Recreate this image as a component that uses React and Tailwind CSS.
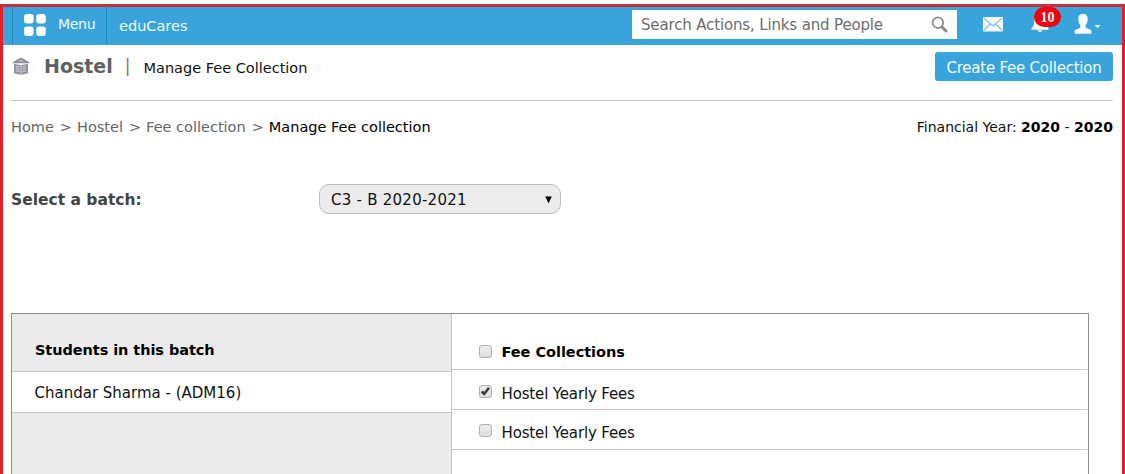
import React from "react";

function MenuGridIcon() {
  return (
    <svg width="24" height="24" viewBox="0 0 24 24" fill="#fff" className="shrink-0">
      <rect x="1" y="1" width="9.6" height="9.6" rx="3" />
      <rect x="13.2" y="1" width="9.6" height="9.6" rx="3" />
      <rect x="1" y="13.4" width="9.6" height="9.6" rx="3" />
      <rect x="13.2" y="13.4" width="9.6" height="9.6" rx="3" />
    </svg>
  );
}

function HostelIcon() {
  return (
    <svg width="18" height="19" viewBox="0 0 18 19" className="shrink-0">
      <path d="M9 0.5 17.300 5.200v1H0.700v-1Z" fill="#8a8c99" />
      <path d="M9 2.400 12.500 4.500h-7Z" fill="#c3c4cd" />
      <path d="M2 7 9 8l7-1v9.300L9 18l-7-1.700Z" fill="#9193a0" />
      <path d="M9 8v10M4 9.500l3.500.5M4 11.700l3.500.5M4 13.900l3.500.5M14 9.500l-3.500.5M14 11.700l-3.500.5M14 13.900l-3.500.5" stroke="#dcdce4" strokeWidth="0.9" fill="none" />
    </svg>
  );
}

function SearchIcon() {
  return (
    <svg width="17" height="17" viewBox="0 0 17 17" fill="none" stroke="#8c8c8c" className="shrink-0">
      <circle cx="6.9" cy="6.700" r="5.300" strokeWidth="1.8" />
      <path d="M11.200 11.200 15 15" strokeWidth="3" strokeLinecap="round" />
    </svg>
  );
}

function MailIcon() {
  return (
    <svg width="20" height="15" viewBox="0 0 20 15" className="shrink-0">
      <rect width="20" height="14.5" rx="0.8" fill="#f4fafd" />
      <path d="M0.8 1.2 10 9l9.2-7.800M0.8 13.4 7.2 7M19.2 13.4 12.8 7" stroke="#7dbbdb" strokeWidth="1.1" fill="none" />
    </svg>
  );
}

function BellIcon() {
  return (
    <svg width="18" height="20" viewBox="0 0 18 20" fill="#f4fafd" className="shrink-0">
      <path d="M9 1c-4 0-5.8 3-5.8 6.500 0 4-.7 5.800-2.700 7.500v1.800h17V15c-2-1.700-2.700-3.500-2.700-7.500C14.800 4 13 1 9 1Z" />
      <path d="M6.500 17.300h5c-.5 2.200-4.500 2.200-5 0Z" />
    </svg>
  );
}

function UserIcon() {
  return (
    <svg width="18" height="20" viewBox="0 0 18 20" fill="#f4fafd" className="shrink-0">
      <path d="M9 0C5.500 0 4.200 2 4.300 5c.1 3 .9 4.800 2 6v2.300C6.300 15 .5 14.700.5 17.500v2.200h17v-2.200c0-2.800-5.800-2.500-5.800-4.200V11c1.100-1.200 1.900-3 2-6C13.800 2 12.500 0 9 0Z" />
    </svg>
  );
}

function Checkbox({ checked }) {
  return (
    <span className="flex h-[13px] w-[13px] shrink-0 items-center justify-center rounded-[3px] border border-[#b0b0b0] bg-linear-to-b from-[#ededed] to-[#dedede]">
      {checked && (
        <svg width="11" height="11" viewBox="0 0 11 11" fill="none" stroke="#3d3d3d" strokeWidth="2.6">
          <path d="M1.700 5.500 4.300 7.800 9 1.800" />
        </svg>
      )}
    </span>
  );
}

function Header() {
  return (
    <header className="flex h-[38px] bg-[#39a4dc] text-[#f1faff]">
      <div className="ml-[9px] flex w-[95px] border-x border-[#2586bb] pl-[10px]">
        <div className="pt-[6px]"><MenuGridIcon /></div>
        <span className="ml-[11px] pt-[7px] text-[14px] leading-5 tracking-[-0.3px]">Menu</span>
      </div>
      <span className="ml-[12px] pt-[9px] text-[14.500px] leading-5">eduCares</span>
      <div className="mt-[3px] ml-auto flex h-[29px] w-[325px] items-center justify-between bg-white pr-[9px] pl-[9px] text-[#6d6d6d]">
        <span className="text-[15px] leading-5 tracking-[-0.15px]">Search Actions, Links and People</span>
        <SearchIcon />
      </div>
      <div className="ml-[26px] pt-[10px]"><MailIcon /></div>
      <div className="relative ml-[28px] w-[18px] pt-[6px]">
        <BellIcon />
        <span className="absolute top-0 left-[3px] flex h-[20px] w-[27px] items-center justify-center rounded-full bg-[#ec0510] font-['Liberation_Serif',serif] text-[14px] font-bold">10</span>
      </div>
      <div className="mr-[21px] ml-[25px] flex pt-[7px]">
        <UserIcon />
        <svg width="7" height="20" viewBox="0 0 7 20" fill="#f4fafd" className="ml-[2px]">
          <path d="M0.500 11h6L3.500 14Z" />
        </svg>
      </div>
    </header>
  );
}

function TitleBar() {
  return (
    <div className="ml-[8px] mr-[9px] flex h-[56px] border-b border-[#c8c8c8]">
      <div className="ml-[1px] pt-[12px]"><HostelIcon /></div>
      <h1 className="ml-[14px] pt-[9px] text-[19px] leading-6 font-bold text-[#606060]">Hostel</h1>
      <span className="ml-[12px] pt-[9px] text-[17px] leading-6 text-[#777]">|</span>
      <span className="ml-[13px] pt-[13px] text-[14.500px] leading-5 text-[#111]">Manage Fee Collection</span>
      <button className="mt-[7px] ml-auto h-[29px] w-[178px] rounded-[3px] bg-[#39a4dc] pt-px text-[15px] leading-[30px] tracking-[-0.23px] whitespace-nowrap text-[#f1faff]">Create Fee Collection</button>
    </div>
  );
}

function Breadcrumbs() {
  return (
    <div className="mr-[9px] ml-[8px] flex justify-between pt-[16px] leading-5 text-[#111]">
      <nav className="flex text-[14.500px] text-[#666]">
        <span>Home</span>
        <span className="ml-[6px]">&gt;</span>
        <span className="ml-[5px]">Hostel</span>
        <span className="ml-[6px]">&gt;</span>
        <span className="ml-[5px]">Fee collection</span>
        <span className="ml-[6px]">&gt;</span>
        <span className="ml-[5px] text-black">Manage Fee collection</span>
      </nav>
      <div className="text-[14px]">
        Financial Year: <b className="text-black">2020</b> - <b className="text-black">2020</b>
      </div>
    </div>
  );
}

function BatchPicker() {
  return (
    <div className="mt-[47px] ml-[8px] flex h-[30px] items-center">
      <label className="w-[308px] pt-px text-[15.500px] leading-5 font-bold text-[#444]">Select a batch:</label>
      <div className="flex h-[30px] w-[242px] items-center justify-between rounded-[10px] border border-[#bdbdbd] bg-[#ececec] pr-[7px] pl-[11px]">
        <span className="pt-px text-[15px] leading-5 tracking-[0.25px] text-[#111]">C3 - B 2020-2021</span>
        <svg width="9" height="8" viewBox="0 0 9 8" className="mt-px"><path d="M1.200 0.500h6.600L4.500 7.300Z" fill="#000" /></svg>
      </div>
    </div>
  );
}

function FeeRow({ checked, children, className }) {
  return (
    <div className={`flex border-b border-[#c8c8c8] pl-[27px] ${className}`}>
      <Checkbox checked={checked} />
      <span className="-mt-px ml-[9.500px] leading-5 tracking-[-0.15px]">{children}</span>
    </div>
  );
}

function FeeTable() {
  return (
    <div className="mt-[99px] ml-[8px] flex w-[1078px] grow border border-b-0 border-[#8f8f8f] text-[15px] text-[#111]">
      <div className="w-[440px] border-r border-[#c0c0c0] bg-[#ebebeb]">
        <div className="h-[58px] border-b border-[#c8c8c8] pt-[26px] pl-[23px] leading-5 font-bold text-black"><span className="text-[14.500px] tracking-[-0.07px]">Students in this batch</span></div>
        <div className="h-[41px] border-b border-[#c8c8c8] bg-white pt-[11px] pl-[22.500px] leading-5">Chandar Sharma - (ADM16)</div>
      </div>
      <div className="grow pr-px">
        <FeeRow className="h-[56px] pt-[31px]"><b className="relative -top-[2px] text-[14.500px] tracking-[-0.03px] text-black">Fee Collections</b></FeeRow>
        <FeeRow className="h-[40px] pt-[15px]" checked>Hostel Yearly Fees</FeeRow>
        <FeeRow className="h-[40px] pt-[14px]">Hostel Yearly Fees</FeeRow>
      </div>
    </div>
  );
}

export default function App() {
  return (
    <div className="h-[474px] w-[1125px] overflow-hidden bg-white pt-1 font-['DejaVu_Sans',sans-serif] whitespace-nowrap">
      <div className="flex h-[470px] flex-col border-x-3 border-t-3 border-x-[#e3202a] border-t-[#c52f3e]">
        <Header />
        <TitleBar />
        <Breadcrumbs />
        <BatchPicker />
        <FeeTable />
      </div>
    </div>
  );
}
